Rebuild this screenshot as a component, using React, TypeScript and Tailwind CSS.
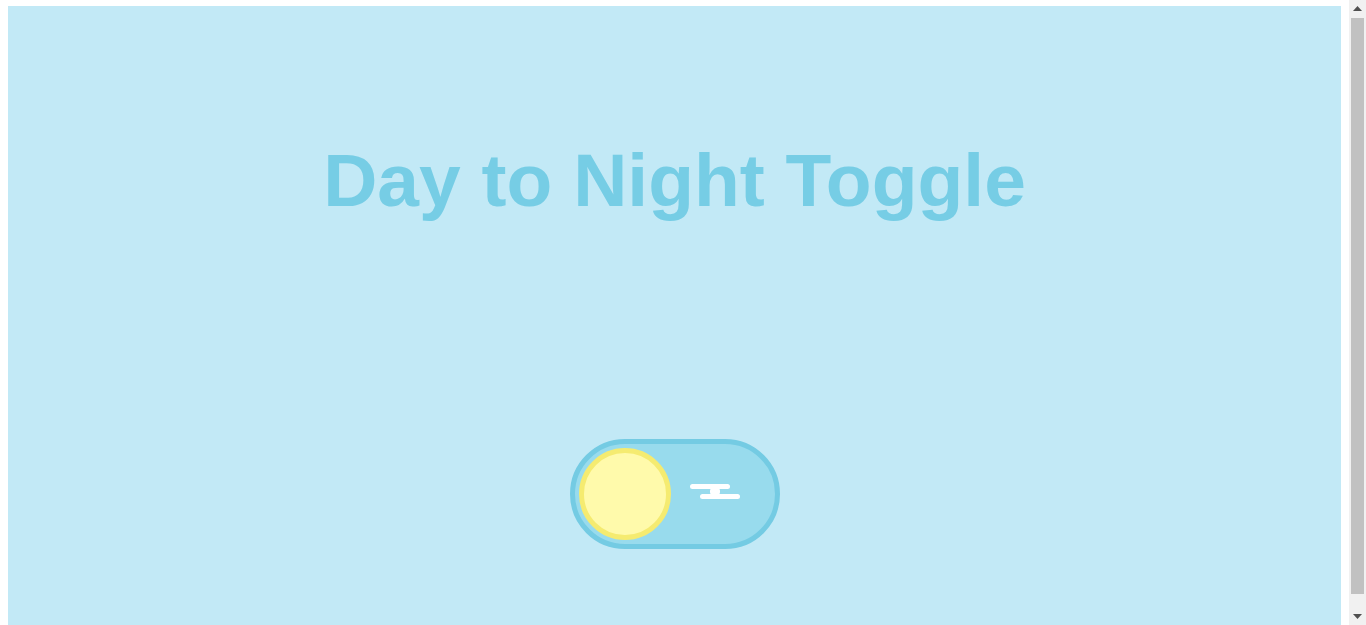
export default function App() {
  return (
    <div className="flex h-[625px] overflow-hidden bg-white" style={{ fontFamily: '"Liberation Sans", Arial, sans-serif' }}>
      <div className="flex-1 px-2 pt-[6px]">
        <div className="flex h-[640px] flex-col items-center bg-[#c2e9f6]">
          <h1 className="mt-[133px] text-[75px] leading-[83px] font-bold text-[#76cde5]">Day to Night Toggle</h1>

          <button className="relative mt-[217px] flex h-[110px] w-[210px] items-center rounded-full border-[5px] border-[#74cbe3] bg-[#98dbed] pl-[4px]">
            <span className="block h-[92px] w-[92px] rounded-full border-[5px] border-[#f5eb70] bg-[#fffaab]" />
            <svg className="absolute top-[40px] left-[115px]" width="50" height="15" viewBox="0 0 50 15" fill="#fff">
              <rect x="0" y="0" width="40" height="5" rx="2.5" />
              <rect x="20" y="4" width="10" height="7" rx="3" />
              <rect x="10" y="10" width="40" height="5" rx="2.5" />
            </svg>
          </button>
        </div>
      </div>

      {/* scrollbar */}
      <div className="flex w-[17px] flex-col items-center bg-[#f1f1f1]">
        <div className="flex h-[17px] items-center justify-center">
          <svg width="9" height="5" viewBox="0 0 9 5" fill="#505050"><path d="M0 5 4.5 0 9 5z" /></svg>
        </div>
        <div className="mt-px h-[576px] w-[13px] bg-[#c1c1c1]" />
        <div className="mt-auto flex h-[17px] items-center justify-center">
          <svg width="9" height="5" viewBox="0 0 9 5" fill="#505050"><path d="M0 0h9L4.5 5z" /></svg>
        </div>
      </div>
    </div>
  );
}
